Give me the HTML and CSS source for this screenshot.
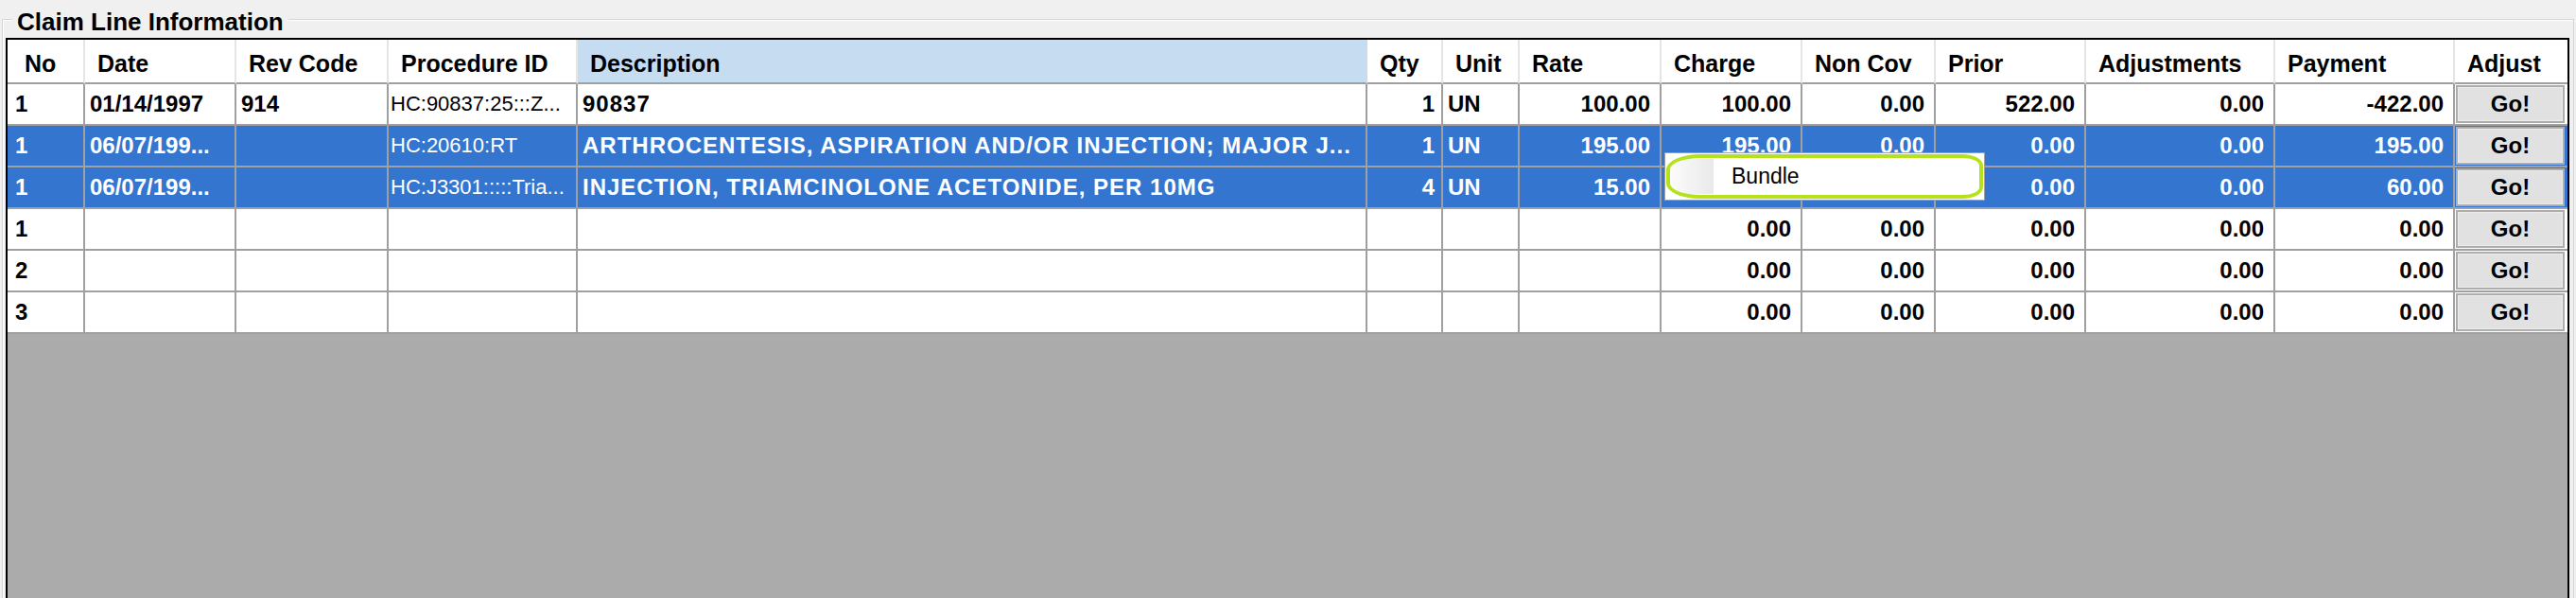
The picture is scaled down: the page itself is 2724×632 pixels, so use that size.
FILE: index.html
```html
<!DOCTYPE html>
<html>
<head>
<meta charset="utf-8">
<title>Claim Line Information</title>
<link rel="stylesheet" href="styles.css">
</head>
<body>
<div class="screen">
  <div class="groupbox">
    <div class="groupbox-title">Claim Line Information</div>
    <div class="grid">
      <div class="row head">
        <div class="cell c-no">No</div>
        <div class="cell">Date</div>
        <div class="cell">Rev Code</div>
        <div class="cell">Procedure ID</div>
        <div class="cell c-desc sorted">Description</div>
        <div class="cell">Qty</div>
        <div class="cell">Unit</div>
        <div class="cell">Rate</div>
        <div class="cell">Charge</div>
        <div class="cell">Non Cov</div>
        <div class="cell">Prior</div>
        <div class="cell">Adjustments</div>
        <div class="cell">Payment</div>
        <div class="cell">Adjust</div>
      </div>

      <div class="row">
        <div class="cell c-no">1</div>
        <div class="cell">01/14/1997</div>
        <div class="cell">914</div>
        <div class="cell c-proc">HC:90837:25:::Z...</div>
        <div class="cell c-desc">90837</div>
        <div class="cell num c-qty">1</div>
        <div class="cell">UN</div>
        <div class="cell num">100.00</div>
        <div class="cell num">100.00</div>
        <div class="cell num">0.00</div>
        <div class="cell num">522.00</div>
        <div class="cell num">0.00</div>
        <div class="cell num">-422.00</div>
        <div class="cell c-btn"><span class="go">Go!</span></div>
      </div>

      <div class="row sel">
        <div class="cell c-no">1</div>
        <div class="cell">06/07/199...</div>
        <div class="cell"></div>
        <div class="cell c-proc">HC:20610:RT</div>
        <div class="cell c-desc">ARTHROCENTESIS, ASPIRATION AND/OR INJECTION; MAJOR J...</div>
        <div class="cell num c-qty">1</div>
        <div class="cell">UN</div>
        <div class="cell num">195.00</div>
        <div class="cell num">195.00</div>
        <div class="cell num">0.00</div>
        <div class="cell num">0.00</div>
        <div class="cell num">0.00</div>
        <div class="cell num">195.00</div>
        <div class="cell c-btn"><span class="go">Go!</span></div>
      </div>

      <div class="row sel">
        <div class="cell c-no">1</div>
        <div class="cell">06/07/199...</div>
        <div class="cell"></div>
        <div class="cell c-proc">HC:J3301:::::Tria...</div>
        <div class="cell c-desc">INJECTION, TRIAMCINOLONE ACETONIDE, PER 10MG</div>
        <div class="cell num c-qty">4</div>
        <div class="cell">UN</div>
        <div class="cell num">15.00</div>
        <div class="cell num"></div>
        <div class="cell num"></div>
        <div class="cell num">0.00</div>
        <div class="cell num">0.00</div>
        <div class="cell num">60.00</div>
        <div class="cell c-btn"><span class="go">Go!</span></div>
      </div>

      <div class="row">
        <div class="cell c-no">1</div>
        <div class="cell"></div>
        <div class="cell"></div>
        <div class="cell c-proc"></div>
        <div class="cell c-desc"></div>
        <div class="cell num c-qty"></div>
        <div class="cell"></div>
        <div class="cell num"></div>
        <div class="cell num">0.00</div>
        <div class="cell num">0.00</div>
        <div class="cell num">0.00</div>
        <div class="cell num">0.00</div>
        <div class="cell num">0.00</div>
        <div class="cell c-btn"><span class="go">Go!</span></div>
      </div>

      <div class="row">
        <div class="cell c-no">2</div>
        <div class="cell"></div>
        <div class="cell"></div>
        <div class="cell c-proc"></div>
        <div class="cell c-desc"></div>
        <div class="cell num c-qty"></div>
        <div class="cell"></div>
        <div class="cell num"></div>
        <div class="cell num">0.00</div>
        <div class="cell num">0.00</div>
        <div class="cell num">0.00</div>
        <div class="cell num">0.00</div>
        <div class="cell num">0.00</div>
        <div class="cell c-btn"><span class="go">Go!</span></div>
      </div>

      <div class="row">
        <div class="cell c-no">3</div>
        <div class="cell"></div>
        <div class="cell"></div>
        <div class="cell c-proc"></div>
        <div class="cell c-desc"></div>
        <div class="cell num c-qty"></div>
        <div class="cell"></div>
        <div class="cell num"></div>
        <div class="cell num">0.00</div>
        <div class="cell num">0.00</div>
        <div class="cell num">0.00</div>
        <div class="cell num">0.00</div>
        <div class="cell num">0.00</div>
        <div class="cell c-btn"><span class="go">Go!</span></div>
      </div>
    </div>
  </div>

  <div class="ctx-menu">
    <div class="ctx-gutter"></div>
    <div class="ctx-item">Bundle</div>
    <div class="ctx-mark"></div>
  </div>
</div>
</body>
</html>
```

FILE: styles.css
```css
html, body {
  margin: 0;
  padding: 0;
}

body {
  background: #f0f0f0;
  width: 2724px;
  height: 632px;
  overflow: hidden;
  font-family: "Liberation Sans", Arial, sans-serif;
  color: #000;
}

.screen {
  position: relative;
  box-sizing: border-box;
  width: 2724px;
  height: 632px;
  padding: 20px 2px 0 2px;
  overflow: hidden;
}

/* group box frame */
.groupbox {
  position: relative;
  height: 700px;
  border: 1px solid #d5d5d5;
  box-shadow: inset 1px 1px 0 #ffffff;
  padding: 19px 4px 0 3px;
}

.groupbox-title {
  position: absolute;
  left: 10px;
  top: -12px;
  padding: 0 5px;
  background: #f0f0f0;
  font-size: 26px;
  font-weight: bold;
  line-height: 29px;
  white-space: nowrap;
}

/* data grid */
.grid {
  box-sizing: border-box;
  height: 640px;
  border: 2px solid #000;
  background: #ababab;
  display: flex;
  flex-direction: column;
}

.row {
  flex: none;
  display: grid;
  grid-template-columns: 82px 160px 161px 200px 835px 80px 81px 150px 149px 141px 159px 200px 190px 119px;
  height: 44px;
}

.cell {
  box-sizing: border-box;
  border-right: 2px solid #a0a0a0;
  border-bottom: 2px solid #a0a0a0;
  background: #ffffff;
  font-size: 24px;
  font-weight: bold;
  line-height: 42px;
  padding: 0 5px;
  white-space: nowrap;
  overflow: hidden;
}

.cell:last-child {
  border-right: none;
}

.c-no {
  padding-left: 8px;
}

.c-proc {
  padding-left: 2px;
  font-size: 22px;
  font-weight: normal;
}

.row .c-desc {
  letter-spacing: 1px;
}

.num {
  text-align: right;
  padding-right: 10px;
}

.num.c-qty {
  padding-right: 7px;
}

/* header */
.row.head {
  height: 47px;
}

.row.head .cell {
  font-size: 25px;
  line-height: 40px;
  padding: 5px 6px 0 13px;
  border-right-color: #e5e5e5;
  letter-spacing: 0;
}

.row.head .c-no {
  padding-left: 18px;
}

.row.head .sorted {
  background: #c5dcf1;
  border-right-color: #c5dcf1;
}

/* selected rows */
.row.sel .cell {
  background: #3375cf;
  color: #ffffff;
}

/* button column */
.c-btn {
  padding: 1px 3px 1px 1px;
  display: flex;
}

.go {
  flex: 1;
  box-sizing: border-box;
  border: 2px solid #adadad;
  background: #e1e1e1;
  box-shadow: inset 0 0 0 1px #ececec;
  color: #000;
  text-align: center;
  font-size: 24px;
  font-weight: bold;
  line-height: 32px;
  padding-top: 2px;
}

/* context menu (floats over the grid) */
.ctx-menu {
  position: absolute;
  left: 1760px;
  top: 161px;
  width: 339px;
  height: 51px;
  box-sizing: border-box;
  border: 1px solid #a0a0a0;
  background: #ffffff;
  display: flex;
}

.ctx-gutter {
  width: 44px;
  margin: 6px 0 6px 7px;
  background: linear-gradient(to right, #fbfbfb, #e9e9e9);
}

.ctx-item {
  padding-left: 19px;
  font-size: 23px;
  line-height: 49px;
  color: #000;
}

.ctx-mark {
  position: absolute;
  left: 1px;
  top: 1px;
  right: 1px;
  bottom: 1px;
  border: 4px solid #b5e21e;
  border-radius: 36px 22px 22px 36px / 16px 12px 12px 16px;
}
```
